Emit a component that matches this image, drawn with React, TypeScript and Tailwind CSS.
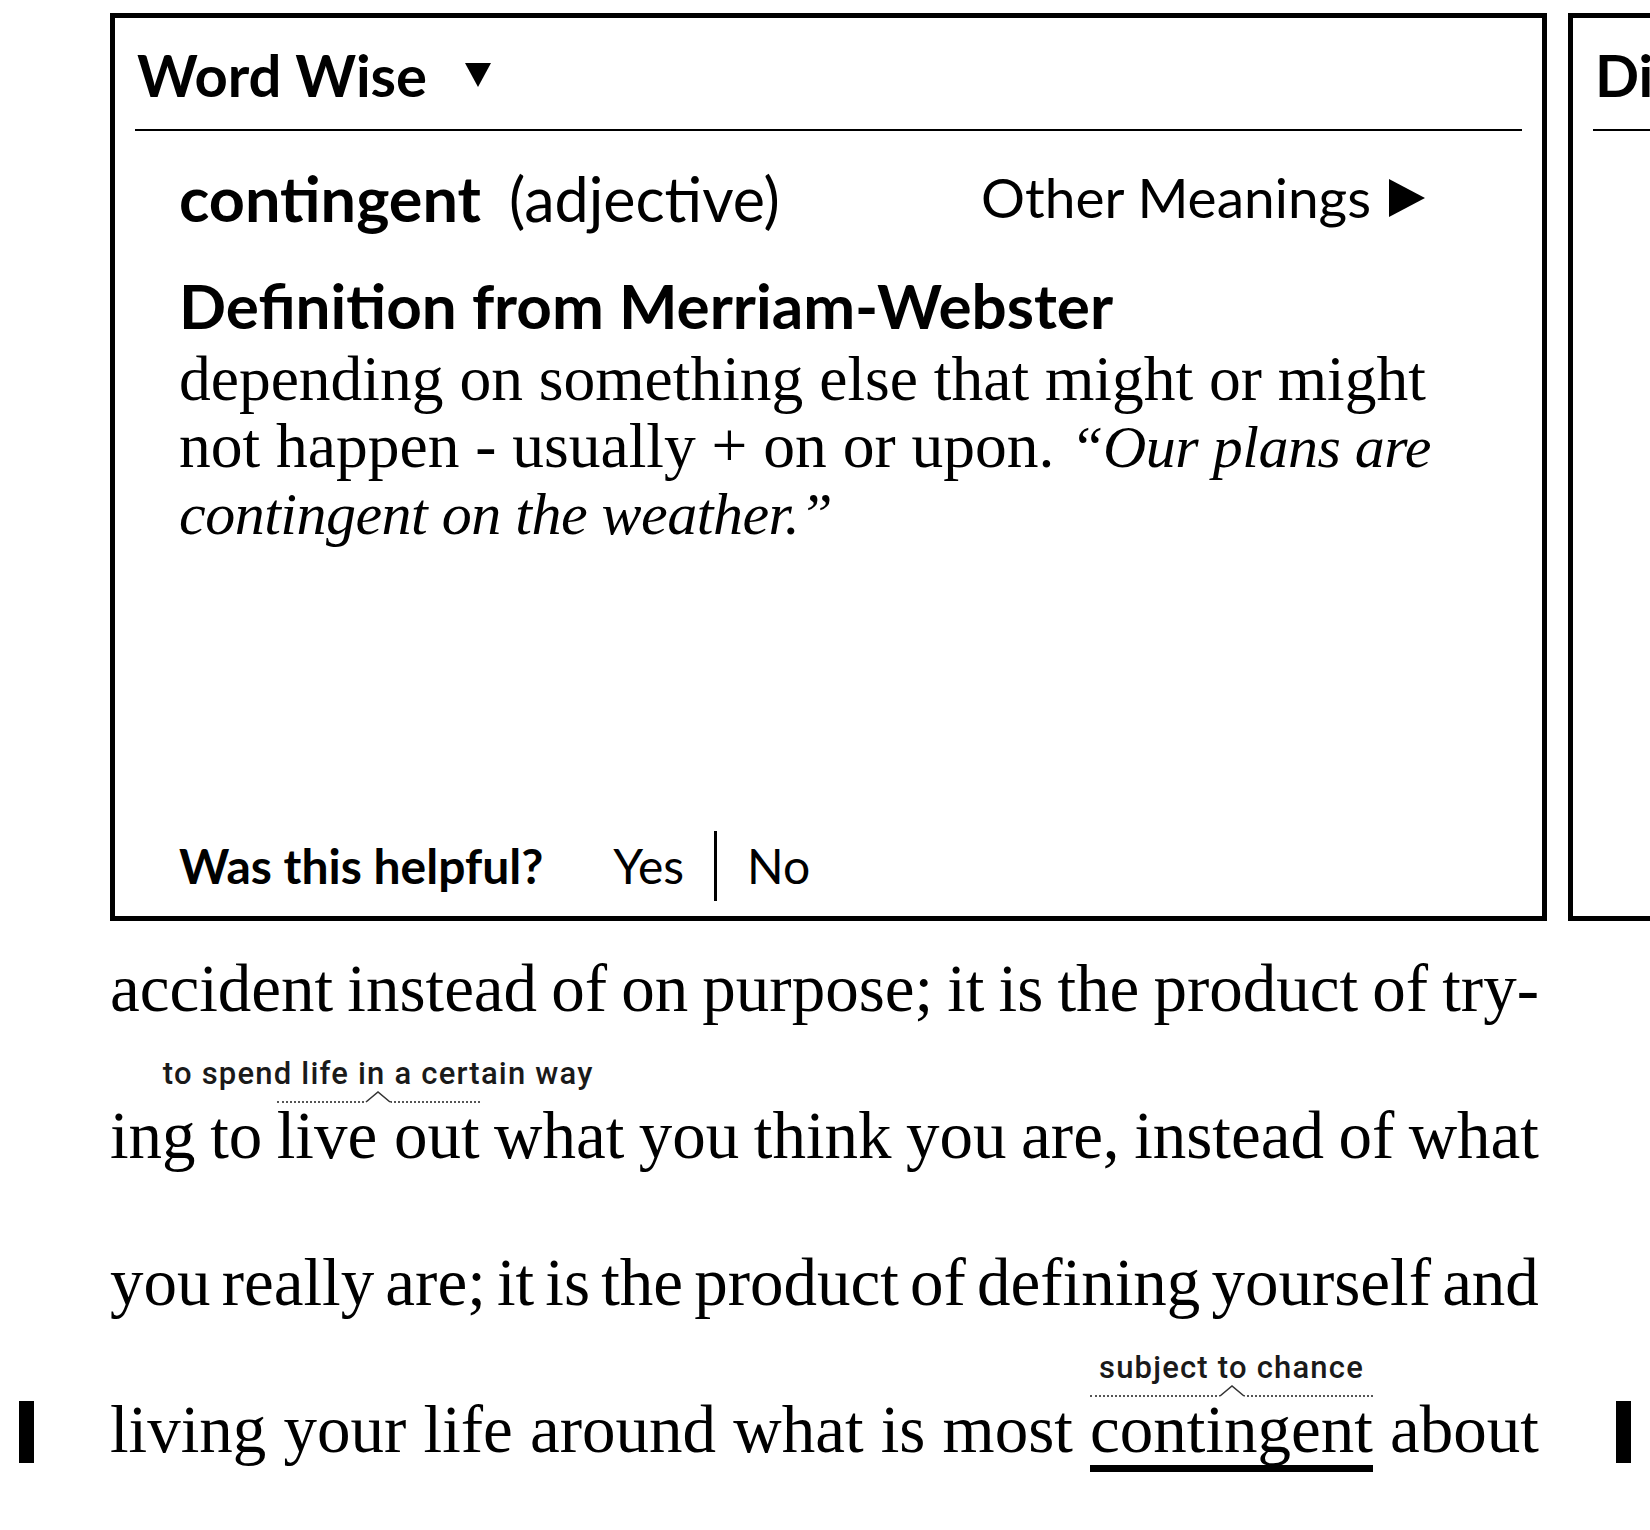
import React from "react";

const sans = "font-['Lato','Noto_Sans',sans-serif]";
const serif = "font-['Liberation_Serif','Times_New_Roman',serif]";

function Glossed({ text, gloss, underline }: { text: string; gloss: string; underline?: boolean }) {
  return (
    <span className="relative inline-block">
      <span className="absolute bottom-[80px] left-1/2 -translate-x-1/2 whitespace-nowrap font-['Roboto',sans-serif] text-[31px] font-medium leading-none tracking-[1.2px] text-[#1a1a1a]">
        {gloss}
      </span>
      <span className="absolute -top-[1px] left-0 right-0 border-t-2 border-dotted border-[#555]" />
      <svg className="absolute -top-[12px] left-1/2 -translate-x-1/2" width="26" height="13" viewBox="0 0 26 13">
        <polygon points="0,13 13,2 26,13" fill="white" />
        <polyline points="1,12 13,2 25,12" fill="none" stroke="#333" strokeWidth="1.6" />
      </svg>
      {text}
      {underline && <span className="absolute left-0 right-0 top-[69px] h-[7px] bg-black" />}
    </span>
  );
}

function Line({ words }: { words: React.ReactNode[] }) {
  return (
    <div className={`flex w-[1429px] items-baseline justify-between whitespace-nowrap ${serif} text-[67px] leading-none`}>
      {words.map((w, i) => (
        <span key={i}>{w}</span>
      ))}
    </div>
  );
}

function WordWiseCard() {
  return (
    <div className="flex h-[908px] w-[1437px] shrink-0 flex-col border-[5px] border-black px-[20px]">
      <div className="flex items-center gap-[38px] pl-[2px] pt-[28px]">
        <span className={`${sans} text-[58px] font-bold leading-none`}>Word Wise</span>
        <svg width="26" height="24" viewBox="0 0 26 24">
          <polygon points="0,0 26,0 13,24" fill="black" />
        </svg>
      </div>
      <div className="mt-[25px] h-[2px] bg-black" />

      <div className="pl-[44px] pr-[97px]">
        <div className="mt-[35px] flex items-center justify-between">
          <div className={`flex items-baseline gap-[28px] ${sans} text-[61px] leading-none`}>
            <span className="text-[63px] font-bold">contingent</span>
            <span>(adjective)</span>
          </div>
          <div className="flex items-center gap-[18px]">
            <span className={`${sans} text-[55px] leading-none`}>Other Meanings</span>
            <svg width="36" height="38" viewBox="0 0 36 38">
              <polygon points="0,0 36,19 0,38" fill="black" />
            </svg>
          </div>
        </div>

        <div className={`mt-[45px] ${sans} text-[62px] font-bold leading-none`}>Definition from Merriam-Webster</div>
        <p className={`mt-[10px] whitespace-nowrap ${serif} text-[63.5px] leading-[66.5px]`}>
          depending on something else that might or might
          <br />
          not happen - usually + on or upon.{" "}
          <i className="text-[60px] tracking-[-0.5px]">“Our plans are</i>
          <br />
          <i className="text-[60px] tracking-[-0.5px]">contingent on the weather.”</i>
        </p>
      </div>

      <div className={`mt-auto mb-[15px] flex h-[70px] items-center pl-[44px] ${sans} text-[48px] leading-none`}>
        <span className="font-bold">Was this helpful?</span>
        <span className="ml-[70px]">Yes</span>
        <span className="mx-[30px] h-[70px] w-[3px] bg-black" />
        <span>No</span>
      </div>
    </div>
  );
}

function DictionaryCard() {
  return (
    <div className="flex h-[908px] w-[1437px] shrink-0 flex-col border-[5px] border-black px-[20px]">
      <div className="pl-[2px] pt-[28px]">
        <span className={`${sans} text-[58px] font-bold leading-none`}>Dictionary</span>
      </div>
      <div className="mt-[25px] h-[2px] bg-black" />
    </div>
  );
}

export default function App() {
  return (
    <div className="h-[1530px] w-[1650px] overflow-hidden bg-white text-black">
      <div className="flex gap-[21px] pl-[110px] pt-[13px]">
        <WordWiseCard />
        <DictionaryCard />
      </div>

      <div className="mt-[34px] flex flex-col gap-[80px]">
        <div className="pl-[110px]">
          <Line words={["accident", "instead", "of", "on", "purpose;", "it", "is", "the", "product", "of", "try-"]} />
        </div>
        <div className="pl-[110px]">
          <Line
            words={[
              "ing",
              "to",
              <Glossed text="live out" gloss="to spend life in a certain way" />,
              "what",
              "you",
              "think",
              "you",
              "are,",
              "instead",
              "of",
              "what",
            ]}
          />
        </div>
        <div className="pl-[110px]">
          <Line words={["you", "really", "are;", "it", "is", "the", "product", "of", "defining", "yourself", "and"]} />
        </div>
        <div className="flex items-end pl-[19px]">
          <span className="h-[62px] w-[15px] bg-black" />
          <div className="ml-[76px]">
            <Line
              words={[
                "living",
                "your",
                "life",
                "around",
                "what",
                "is",
                "most",
                <Glossed text="contingent" gloss="subject to chance" underline />,
                "about",
              ]}
            />
          </div>
          <span className="ml-[77px] h-[62px] w-[15px] bg-black" />
        </div>
      </div>
    </div>
  );
}
